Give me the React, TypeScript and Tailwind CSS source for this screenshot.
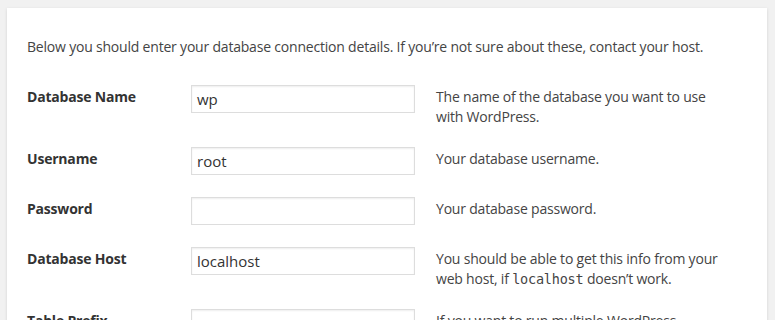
import React from "react";

const rows: { label: string; value: string; desc: React.ReactNode }[] = [
  {
    label: "Database Name",
    value: "wp",
    desc: <>The name of the database you want to use<br />with WordPress.</>,
  },
  { label: "Username", value: "root", desc: <>Your database username.</> },
  { label: "Password", value: "", desc: <>Your database password.</> },
  {
    label: "Database Host",
    value: "localhost",
    desc: (
      <>
        You should be able to get this info from your
        <br />
        web host, if{" "}
        <span className="font-['DejaVu_Sans_Mono',monospace] text-[13.5px] tracking-[-0.2px]">localhost</span>{" "}
        doesn’t work.
      </>
    ),
  },
  {
    label: "Table Prefix",
    value: "",
    desc: <>If you want to run multiple WordPress<br />installations in a single database, change this.</>,
  },
];

export default function App() {
  return (
    <div className="min-h-[320px] w-full bg-[#f1f1f1] pt-[8px] pl-[7px] pr-[8px] font-['Open_Sans',sans-serif] text-[#444]">
      <div className="bg-white shadow-[0_1px_3px_rgba(0,0,0,0.13)] px-[20px] pt-[29px] pb-[20px]">
        <p className="text-[14px] leading-[20px] tracking-[-0.2px]">
          Below you should enter your database connection details. If you’re not sure about these, contact your host.
        </p>
        <div className="mt-[18px] flex flex-col gap-[2px]">
          {rows.map((r) => (
            <div key={r.label} className="flex items-start py-[10px]">
              <div className="w-[164px] shrink-0 pt-[2px] text-[14px] font-bold leading-[20px] tracking-[-0.2px] text-[#333]">
                {r.label}
              </div>
              <div className="h-[28px] w-[224px] shrink-0 border border-[#ddd] bg-white px-[5px] text-[15px] leading-[27px] text-[#333] shadow-[inset_0_1px_2px_rgba(0,0,0,0.07)]">
                {r.value}
              </div>
              <div className="ml-[21px] pt-[2px] mb-[-2px] text-[14px] leading-[20px] tracking-[-0.2px]">{r.desc}</div>
            </div>
          ))}
        </div>
      </div>
    </div>
  );
}
